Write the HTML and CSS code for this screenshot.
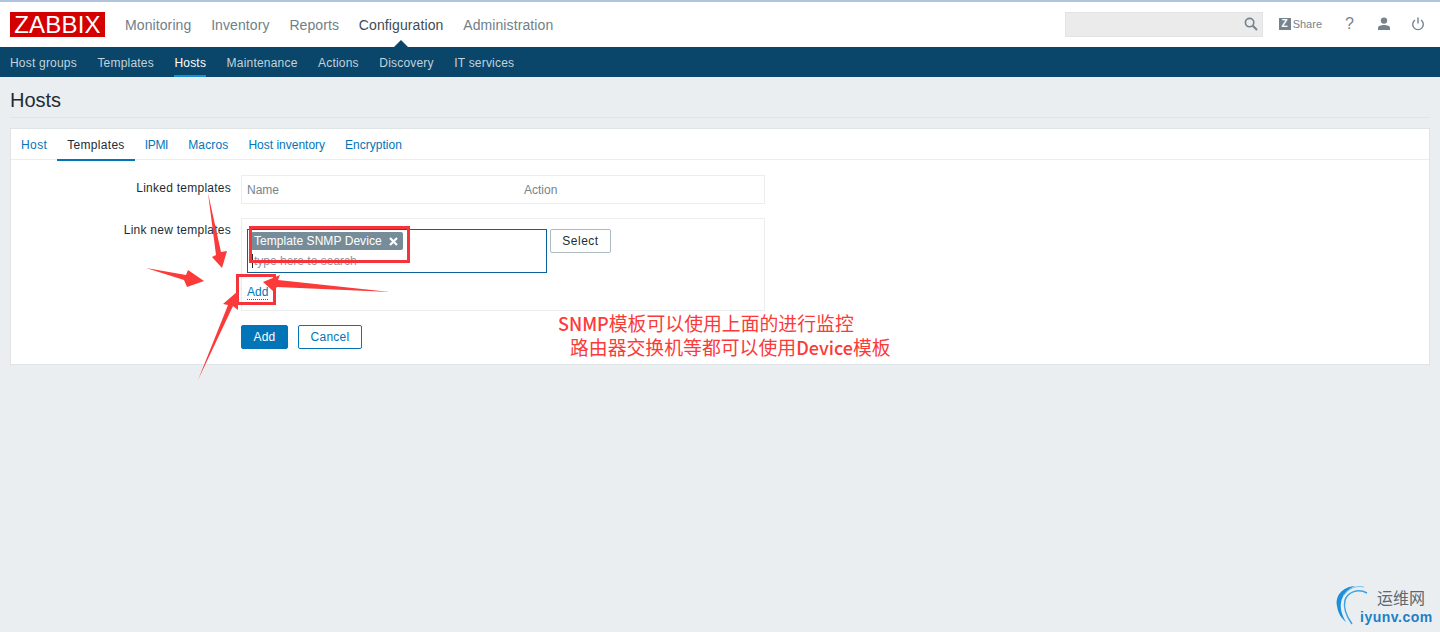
FILE: index.html
```html
<!DOCTYPE html>
<html lang="en">
<head>
<meta charset="utf-8">
<title>Hosts</title>
<link rel="stylesheet" href="styles.css">
</head>
<body>
<header class="top">
  <div class="logo">ZABBIX</div>
  <nav class="main-nav">
    <a>Monitoring</a><a>Inventory</a><a>Reports</a><a class="on">Configuration</a><a>Administration</a>
  </nav>
  <div class="tools">
    <div class="search">
      <svg width="14" height="14" viewBox="0 0 14 14"><circle cx="5.6" cy="5.6" r="4.2" fill="none" stroke="#76838c" stroke-width="1.6"/><path d="M8.8 8.8L13 13" stroke="#76838c" stroke-width="2"/></svg>
    </div>
    <a class="share"><span class="zbox">Z</span>Share</a>
    <a class="help">?</a>
    <svg class="user" width="14" height="14" viewBox="0 0 14 14"><circle cx="7" cy="3.6" r="3.2" fill="#76838c"/><path d="M1 13v-2.2C1 9 4 8 7 8s6 1 6 2.8V13z" fill="#76838c"/></svg>
    <svg class="power" width="14" height="14" viewBox="0 0 14 14"><path d="M4 3A5.3 5.3 0 1 0 10 3" fill="none" stroke="#76838c" stroke-width="1.4"/><path d="M7 0.5V6.5" stroke="#76838c" stroke-width="1.4"/></svg>
  </div>
</header>
<nav class="sub-nav">
  <a>Host groups</a><a>Templates</a><a class="on">Hosts</a><a>Maintenance</a><a>Actions</a><a>Discovery</a><a>IT services</a>
</nav>
<main class="page">
  <h1 class="title">Hosts</h1>
  <section class="card">
    <div class="tabs">
      <a class="t-host">Host</a><a class="on">Templates</a><a class="t-ipmi">IPMI</a><a>Macros</a><a class="t-plain">Host inventory</a><a class="t-plain">Encryption</a>
    </div>
    <div class="form">
      <div class="row row-linked">
        <label>Linked templates</label>
        <div class="box linked"><span class="c-name">Name</span><span>Action</span></div>
      </div>
      <div class="row row-new">
        <label>Link new templates</label>
        <div class="box newbox">
          <div class="pick">
            <div class="multi">
              <span class="tag">Template SNMP Device<svg class="x" width="9" height="9" viewBox="0 0 9 9"><path d="M1 1L8 8M8 1L1 8" stroke="#fff" stroke-width="2.200"/></svg></span>
              <span class="ph">type here to search</span>
            </div>
            <button class="btn-select">Select</button>
          </div>
          <a class="add-link">Add</a>
        </div>
      </div>
      <div class="row actions">
        <label></label>
        <div class="buttons"><button class="btn-add">Add</button><button class="btn-cancel">Cancel</button></div>
      </div>
    </div>
  </section>
</main>

<svg class="marks" width="1440" height="632" viewBox="0 0 1440 632">
  <g fill="none" stroke="#f5333a" stroke-width="3">
    <rect x="250.500" y="227.500" width="158" height="34"/>
    <rect x="237.500" y="275.500" width="37" height="28"/>
  </g>
  <g fill="#fb3a3a">
    <path d="M208 193L221 252L227 251L222 268L212 257L216 255z"/>
    <path d="M146 268L186 275L188 270L204 281L187 287L184 280z"/>
    <path d="M390 292L278 280L280 275L263 282L273 291L277 287z"/>
    <path d="M198 380L228 305L223 304L238 291L238 310L233 306z"/>
  </g>
</svg>
<div class="note">
  <div><span class="lat">SNMP</span>模板可以使用上面的进行监控</div>
  <div class="note2">路由器交换机等都可以使用<span class="lat">Device</span>模板</div>
</div>
<div class="wm">
  <svg width="44" height="48" viewBox="0 0 44 48"><path d="M21 2C8 3 1 12 3 22C4 29 7 34 12 38C8 31 6 25 7 19C8 11 14 5 21 2z" fill="#1c8fd8"/><path d="M33 9C24 4 14 8 11 16C9 24 13 33 18 40" fill="none" stroke="#3aa3e3" stroke-width="1.500"/><path d="M30 3C22 1 14 5 9 12" fill="none" stroke="#7cc4ee" stroke-width="1"/></svg>
  <span class="wm1">运维网</span>
  <span class="wm2">iyunv.com</span>
</div>
</body>
</html>
```
FILE: styles.css
```css
* { box-sizing: border-box; }
html, body { margin: 0; height: 632px; overflow: hidden; }
body { position: relative; background: #ebeef0; font: 12px "Liberation Sans", Arial, sans-serif; color: #1f2c33; }
a { text-decoration: none; }

.top { height: 47px; background: #fff; border-top: 2px solid #b0c4de; display: flex; align-items: flex-start; padding-left: 10px; }
.logo { width: 95px; height: 25px; margin-top: 10px; background: #d40000; color: #fff; font-size: 24px; line-height: 25px; text-align: center; letter-spacing: .2px; }
.main-nav { display: flex; gap: 19.75px; margin-left: 20px; font-size: 14px; line-height: 16px; padding-top: 15px; letter-spacing: .1px; }
.main-nav a { color: #6f8089; position: relative; height: 30px; }
.main-nav a.on { color: #3d4d57; }
.main-nav a.on::after { content: ""; position: absolute; left: 50%; margin-left: -7px; bottom: 0; border: 7px solid transparent; border-top: 0; border-bottom-color: #0a466a; }
.tools { margin-left: auto; display: flex; align-items: center; height: 24px; margin-top: 10px; padding-right: 15px; color: #76838c; }
.search { width: 198px; height: 25px; background: #ebebeb; border: 1px solid #e3e3e3; display: flex; justify-content: flex-end; align-items: center; padding-right: 4px; }
.share { display: flex; align-items: center; font-size: 11px; color: #76838c; margin-left: 16px; }
.zbox { width: 12px; height: 12px; background: #76838c; color: #fff; font-weight: bold; font-size: 10px; line-height: 12px; text-align: center; margin-right: 2px; }
.help { font-size: 16px; width: 10px; margin-left: 23px; }
.user { margin-left: 22px; }
.power { margin-left: 20px; }

.sub-nav { height: 30px; background: #0a466a; display: flex; gap: 20.5px; padding-left: 10px; letter-spacing: .2px; }
.sub-nav a { color: #c3d3dc; line-height: 32px; height: 30px; }
.sub-nav a.on { color: #fff; border-bottom: 2px solid #168fd6; }

.page { padding: 0 10px; }
.title { margin: 0; height: 41px; font-size: 20px; font-weight: normal; line-height: 46px; color: #1f2c33; border-bottom: 1px solid #dfe4e7; }
.card { margin-top: 10px; height: 237px; background: #fff; border: 1px solid #dfe4e7; }
.tabs { height: 31px; display: flex; border-bottom: 1px solid #ebeef0; letter-spacing: .15px; }
.tabs a { color: #0275b8; padding: 0 10px; line-height: 32px; height: 32px; }
.tabs a.on { color: #1f2c33; border-bottom: 2px solid #0275b8; letter-spacing: .3px; }
.tabs a.t-host { letter-spacing: .4px; }
.tabs a.t-ipmi { letter-spacing: -.3px; }
.tabs a.t-plain { letter-spacing: 0; }

.row { display: flex; }
.row label { width: 220px; text-align: right; flex: none; letter-spacing: .25px; }
.row-linked { margin-top: 15px; }
.row-linked label { line-height: 25px; margin-top: 1px; }
.row-new { margin-top: 14px; }
.row-new label { line-height: 24px; }
.box { width: 524px; margin-left: 10px; border: 1px solid #ebeef0; }
.linked { height: 29px; display: flex; align-items: center; color: #76838c; padding-left: 5px; }
.c-name { width: 277px; }
.newbox { height: 93px; padding: 10px 5px; }
.pick { display: flex; align-items: flex-start; gap: 3px; }
.multi { width: 300px; height: 44px; border: 1px solid #0a6299; padding: 2px 3px; position: relative; }
.tag { display: inline-flex; align-items: center; height: 18px; background: #768d99; color: #fff; border-radius: 2px; padding: 0 5px 0 3px; line-height: 18px; letter-spacing: .06px; }
.x { margin-left: 7px; }
.ph { display: block; color: #8a959c; padding-left: 1px; line-height: 14px; margin-top: 4px; border-left: 1px solid #1f2c33; margin-left: 1px; }
.btn-select { height: 24px; width: 61px; background: #fff; border: 1px solid #acbbc2; border-radius: 2px; font: 12px "Liberation Sans", Arial, sans-serif; color: #1f2c33; padding: 0; letter-spacing: .5px; }
.add-link { display: inline-block; margin-top: 12px; color: #0275b8; line-height: 14px; border-bottom: 1px dotted #0275b8; }
.actions { margin-top: 14px; }
.buttons { margin-left: 10px; display: flex; gap: 10px; }
.btn-add, .btn-cancel { height: 24px; border-radius: 2px; font: 12px "Liberation Sans", Arial, sans-serif; padding: 0; letter-spacing: .25px; }
.btn-add { width: 47px; background: #0275b8; color: #fff; border: 1px solid #0275b8; }
.btn-cancel { width: 64px; background: #fff; color: #0275b8; border: 1px solid #0275b8; }

.marks { position: absolute; left: 0; top: 0; pointer-events: none; }
.note { position: absolute; left: 558px; top: 311px; color: #fb3a3a; font: 18.85px/24px "Noto Sans CJK SC", "Liberation Sans", sans-serif; white-space: nowrap; }
.note .lat { font-size: 18px; font-weight: 500; }
.note2 { padding-left: 12px; }
.wm { position: absolute; left: 1334px; top: 584px; width: 106px; height: 48px; }
.wm svg { position: absolute; left: 0; top: 0; }
.wm1 { position: absolute; left: 43px; top: 4px; font: 16px/18px "Noto Sans CJK SC", sans-serif; color: #5d6870; }
.wm2 { position: absolute; left: 26px; top: 24px; font: bold 14px/18px "Liberation Sans", sans-serif; color: #1b80c8; letter-spacing: .5px; }
```
